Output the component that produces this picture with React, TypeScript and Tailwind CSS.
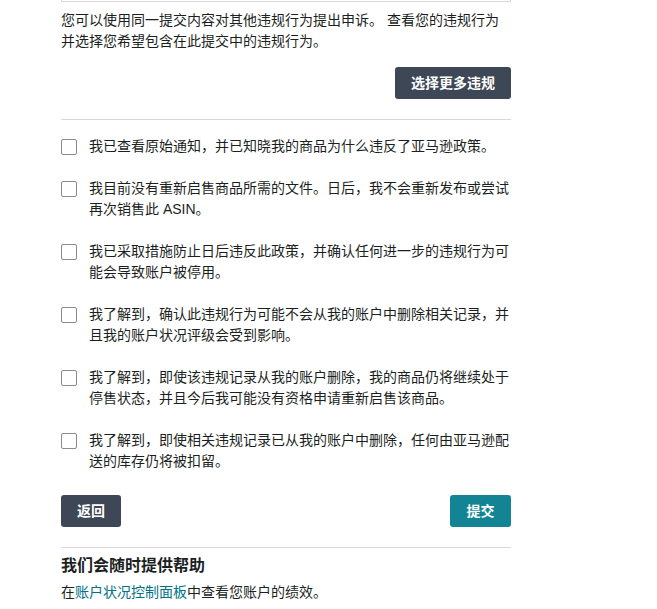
const statements = [
  '我已查看原始通知，并已知晓我的商品为什么违反了亚马逊政策。',
  '我目前没有重新启售商品所需的文件。日后，我不会重新发布或尝试再次销售此 ASIN。',
  '我已采取措施防止日后违反此政策，并确认任何进一步的违规行为可能会导致账户被停用。',
  '我了解到，确认此违规行为可能不会从我的账户中删除相关记录，并且我的账户状况评级会受到影响。',
  '我了解到，即使该违规记录从我的账户删除，我的商品仍将继续处于停售状态，并且今后我可能没有资格申请重新启售该商品。',
  '我了解到，即使相关违规记录已从我的账户中删除，任何由亚马逊配送的库存仍将被扣留。',
];

const font = { fontFamily: '"Liberation Sans", "Noto Sans CJK SC", sans-serif' };

export default function App() {
  return (
    <div className="min-h-[609px] bg-white pl-[61px] text-[#1b1f23]" style={font}>
      <div className="w-[450px]">
        {/* bottom edge of the previous panel */}
        <div className="h-[2px] border-x border-b border-[#d5d9d9]" />

        <p className="mt-[8px] text-[14px] leading-[21px]">
          您可以使用同一提交内容对其他违规行为提出申诉。 查看您的违规行为并选择您希望包含在此提交中的违规行为。
        </p>

        <div className="mt-[15px] flex justify-end">
          <button className="h-[32px] rounded-[3px] bg-[#3e4755] px-[16px] text-[14px] font-bold text-white">
            选择更多违规
          </button>
        </div>

        <div className="mt-[20px] border-t border-[#d5d9d9] pt-[16px]">
          <div className="flex flex-col gap-[21px]">
            {statements.map((s) => (
              <label key={s} className="flex items-start gap-[12px]">
                <span className="mt-[3px] h-[16px] w-[16px] shrink-0 rounded-[2px] border border-[#888c8c] bg-white" />
                <span className="text-[14px] leading-[21px]">{s}</span>
              </label>
            ))}
          </div>
        </div>

        <div className="mt-[23px] flex justify-between">
          <button className="h-[32px] w-[60px] rounded-[3px] bg-[#3e4755] text-[14px] font-bold text-white">
            返回
          </button>
          <button className="h-[32px] w-[61px] rounded-[3px] bg-[#138493] text-[14px] font-bold text-white">
            提交
          </button>
        </div>

        <div className="mt-[20px] border-t border-[#d5d9d9] pt-[7px]">
          <h3 className="text-[16px] font-bold leading-[22px]">我们会随时提供帮助</h3>
          <p className="mt-[5px] text-[14px] leading-[21px]">
            在<a className="text-[#007185]">账户状况控制面板</a>中查看您账户的绩效。
          </p>
        </div>
      </div>
    </div>
  );
}
